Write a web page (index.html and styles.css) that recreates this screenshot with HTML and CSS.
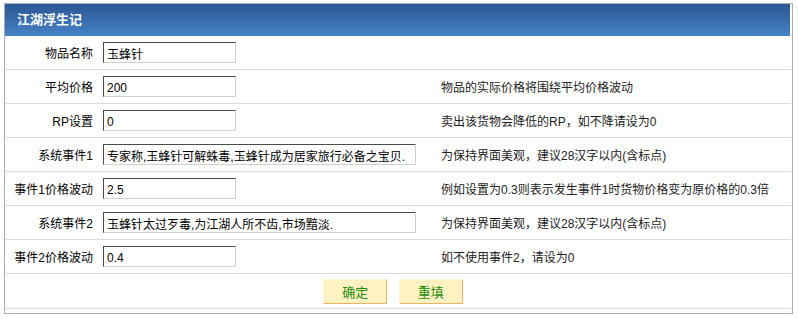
FILE: index.html
```html
<!DOCTYPE html>
<html lang="zh-CN">
<head>
    <meta charset="UTF-8">
    <meta name="viewport" content="width=device-width, initial-scale=1.0">
    <title>江湖浮生记</title>
    <link rel="stylesheet" href="styles.css">
</head>
<body>

<div class="panel">
    <div class="panel-title">江湖浮生记</div>
    <form>
        <table class="form-table">
            <tr>
                <td class="label">物品名称</td>
                <td class="field"><input type="text" class="text-input" value="玉蜂针"></td>
                <td class="tip"></td>
            </tr>
            <tr>
                <td class="label">平均价格</td>
                <td class="field"><input type="text" class="text-input" value="200"></td>
                <td class="tip">物品的实际价格将围绕平均价格波动</td>
            </tr>
            <tr>
                <td class="label">RP设置</td>
                <td class="field"><input type="text" class="text-input" value="0"></td>
                <td class="tip">卖出该货物会降低的RP，如不降请设为0</td>
            </tr>
            <tr>
                <td class="label">系统事件1</td>
                <td class="field"><input type="text" class="text-input wide" value="专家称,玉蜂针可解蛛毒,玉蜂针成为居家旅行必备之宝贝."></td>
                <td class="tip">为保持界面美观，建议28汉字以内(含标点)</td>
            </tr>
            <tr>
                <td class="label">事件1价格波动</td>
                <td class="field"><input type="text" class="text-input" value="2.5"></td>
                <td class="tip">例如设置为0.3则表示发生事件1时货物价格变为原价格的0.3倍</td>
            </tr>
            <tr>
                <td class="label">系统事件2</td>
                <td class="field"><input type="text" class="text-input wide" value="玉蜂针太过歹毒,为江湖人所不齿,市场黯淡."></td>
                <td class="tip">为保持界面美观，建议28汉字以内(含标点)</td>
            </tr>
            <tr>
                <td class="label">事件2价格波动</td>
                <td class="field"><input type="text" class="text-input" value="0.4"></td>
                <td class="tip">如不使用事件2，请设为0</td>
            </tr>
            <tr>
                <td class="actions" colspan="3">
                    <button type="submit" class="btn">确定</button>
                    <button type="reset" class="btn">重填</button>
                </td>
            </tr>
        </table>
    </form>
</div>

</body>
</html>
```

FILE: styles.css
```css
body {
    margin: 3px 0 0 4px;
    font-family: "Liberation Sans", "Noto Sans CJK SC", sans-serif;
    font-size: 12px;
    color: #000;
    background: #fff;
}
.panel {
    width: 786px;
    border: 1px solid #a7b0b9;
    padding: 0 1px 4px 0;
    box-sizing: content-box;
}
.panel-title {
    height: 32px;
    line-height: 32px;
    margin-right: 1px;
    padding-left: 12px;
    color: #fff;
    font-size: 13px;
    font-weight: bold;
    background: linear-gradient(#2c5795, #4682c5);
}
.form-table {
    width: 100%;
    border-collapse: separate;
    border-spacing: 0;
}
.form-table td {
    height: 33px;
    padding: 0;
    border-bottom: 1px solid #d6dce2;
    vertical-align: middle;
}
.label {
    width: 88px;
    padding-right: 4px !important;
    text-align: right;
    white-space: nowrap;
}
.field {
    width: 340px;
}
.tip {
    padding-left: 4px !important;
    color: #222;
    white-space: nowrap;
}
.text-input {
    width: 133px;
    height: 21px;
    margin-left: 6px;
    padding: 2px 3px 0;
    box-sizing: border-box;
    border: 1px solid;
    border-color: #4a4a4a #d0d0d0 #d0d0d0 #4a4a4a;
    font-family: "Liberation Sans", "Noto Sans CJK SC", sans-serif;
    font-size: 12px;
    color: #000;
    vertical-align: middle;
}
.text-input.wide {
    width: 313px;
}
.actions {
    height: 34px !important;
    padding-right: 10px !important;
    text-align: center;
}
.btn {
    width: 64px;
    height: 25px;
    margin: 0 4px;
    padding: 0;
    border: 1px solid;
    border-color: #fff6d6 #eab465 #eab465 #fff6d6;
    background: #fff2c2;
    color: #1c8c0c;
    font-family: "Liberation Sans", "Noto Sans CJK SC", sans-serif;
    font-size: 13px;
    vertical-align: middle;
}
```
